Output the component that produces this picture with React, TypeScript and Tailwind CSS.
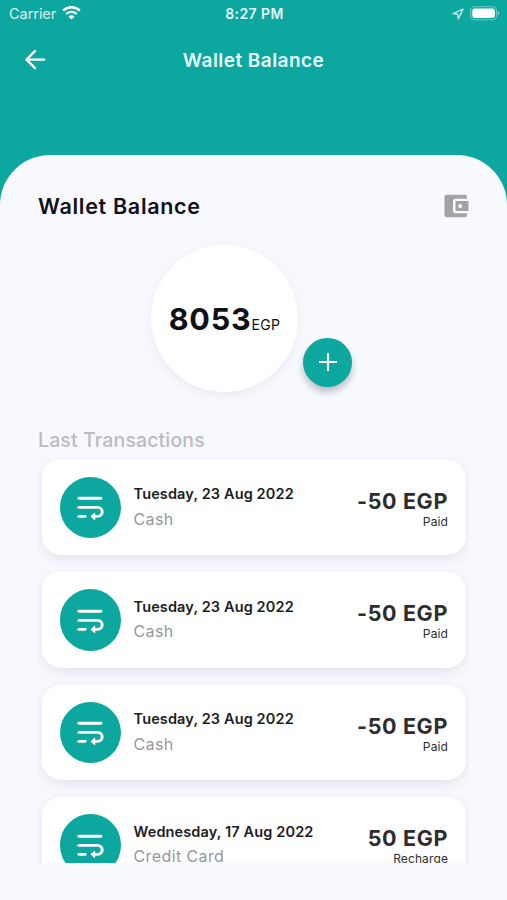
type Transaction = {
  date: string;
  method: string;
  amount: string;
  status: string;
};

const transactions: Transaction[] = [
  { date: "Tuesday, 23 Aug 2022", method: "Cash", amount: "-50 EGP", status: "Paid" },
  { date: "Tuesday, 23 Aug 2022", method: "Cash", amount: "-50 EGP", status: "Paid" },
  { date: "Tuesday, 23 Aug 2022", method: "Cash", amount: "-50 EGP", status: "Paid" },
  { date: "Wednesday, 17 Aug 2022", method: "Credit Card", amount: "50 EGP", status: "Recharge" },
];

function WifiIcon() {
  return (
    <svg width="19" height="14" viewBox="0 0 19 14" fill="none" stroke="white" className="-mt-[2px]">
      <path d="M1.2 4.6a12 12 0 0 1 16.6 0" strokeWidth="2.5" />
      <path d="M4.2 8a7.7 7.7 0 0 1 10.6 0" strokeWidth="2.3" />
      <path d="M9.5 13.6 6.4 10.5a4.4 4.4 0 0 1 6.2 0z" fill="white" stroke="none" />
    </svg>
  );
}

function StatusBar() {
  return (
    <div className="grid h-7 grid-cols-3 items-center pl-[9px] pr-[7px] text-white">
      <div className="flex items-center gap-[6px]">
        <span className="text-[14.5px] leading-7 tracking-[-0.05px] text-white/85">Carrier</span>
        <WifiIcon />
      </div>
      <div className="text-center text-[14px] font-semibold leading-7 tracking-[0.4px] text-white/90">8:27 PM</div>
      <div className="flex items-center justify-end gap-[6px]">
        <svg width="12" height="12" viewBox="0 0 12 12" fill="none" stroke="white" strokeOpacity="0.85" strokeWidth="1.2" strokeLinejoin="round">
          <path d="M11 1 1 5.7l4.7.5.6 4.8z" />
        </svg>
        <svg width="30" height="15" viewBox="0 0 30 15" className="-mt-[1px]">
          <rect x="0.6" y="0.8" width="26" height="13" rx="4" fill="none" stroke="white" strokeOpacity="0.4" strokeWidth="1.1" />
          <rect x="2.3" y="2.5" width="22.6" height="9.6" rx="2.4" fill="white" />
          <path d="M27.8 5.2v4.2c.9-.4 1.4-1.2 1.4-2.1s-.5-1.7-1.4-2.1z" fill="white" fillOpacity="0.5" />
        </svg>
      </div>
    </div>
  );
}

function WrapIcon() {
  return (
    <svg width="28" height="26" viewBox="0 0 28 26" fill="none" stroke="white" strokeWidth="2.9" strokeLinecap="round" strokeLinejoin="round">
      <path d="M2.9 4.3h22" />
      <path d="M2.9 13.4h18.8a4.5 4.5 0 0 1 0 9H18.5" />
      <path d="M2.9 22.4h6.2" />
      <path d="M18.6 19.4v6l-3.4-3z" fill="white" strokeWidth="1.2" />
    </svg>
  );
}

function TransactionCard({ date, method, amount, status }: Transaction) {
  return (
    <li className="flex h-[95.5px] shrink-0 rounded-[19px] bg-white pl-[17.5px] pr-[18px] shadow-[0_4px_12px_rgba(60,60,80,0.1)]">
      <div className="mt-[17px] flex size-[61.5px] shrink-0 items-center justify-center rounded-full bg-[#0ca79f]">
        <WrapIcon />
      </div>
      <div className="ml-[12.5px] mt-[24.5px] flex flex-1 flex-col whitespace-nowrap">
        <span className="text-[14.5px] font-semibold leading-[20px] tracking-[0.13px] text-[#1c1c22]">{date}</span>
        <span className="mt-[3.5px] text-[16px] leading-[22px] tracking-[0.4px] text-[#97979f]">{method}</span>
      </div>
      <div className="mt-[27px] flex flex-col items-end whitespace-nowrap text-[#2d2d2f]">
        <span className="text-[21.5px] font-bold leading-[28px] tracking-[0.65px]">{amount}</span>
        <span className="text-[12px] leading-[14px] tracking-[0.12px]">{status}</span>
      </div>
    </li>
  );
}

export default function App() {
  return (
    <div className="flex h-[900px] w-[507px] flex-col overflow-hidden bg-[linear-gradient(#0ca79f_250px,#f8f9fe_250px)] font-['Inter','Liberation_Sans',sans-serif]">
      <StatusBar />
      <header className="grid h-[64px] grid-cols-[60px_1fr_60px] items-center">
        <button aria-label="Back" className="pl-[25px]">
          <svg width="21" height="20" viewBox="0 0 21 20" fill="none" stroke="white" strokeWidth="2.4" strokeLinecap="round" strokeLinejoin="round">
            <path d="M19.2 9.6H1.7M10 1 1.5 9.6l8.5 8.6" />
          </svg>
        </button>
        <h1 className="pt-[1px] text-center text-[19px] font-semibold leading-6 tracking-[0.45px] text-[#e9fffd]">Wallet Balance</h1>
      </header>

      <main className="mt-[62.5px] flex flex-1 flex-col rounded-t-[50px] bg-[#f8f9fe]">
        <div className="mt-[37.5px] flex h-7 items-center justify-between pl-[38px] pr-[38px]">
          <h2 className="text-[21.5px] font-semibold leading-7 tracking-[0.7px] text-[#101018]">Wallet Balance</h2>
          <svg width="25" height="24" viewBox="0 0 25 24" className="fill-[#a3a3a3]">
            <path d="M2.5 0.8h18.5a2 2 0 0 1 2 2v1.9H11.5a2.5 2.5 0 0 0-2.5 2.5v9.6a2.5 2.5 0 0 0 2.5 2.5H23v2a2 2 0 0 1-2 2H2.5a2 2 0 0 1-2-2v-18.5a2 2 0 0 1 2-2z" />
            <path fillRule="evenodd" d="M11.5 7.1h13v9.8h-13zM16.2 10a2 2 0 1 0 0 4 2 2 0 0 0 0-4z" />
          </svg>
        </div>

        <section className="mt-[24.5px] flex h-[147px] items-end gap-[5px] pl-[151px]">
          <div className="flex size-[147px] items-center justify-center rounded-full bg-white shadow-[0_3px_10px_rgba(60,60,80,0.08)]">
            <div className="flex items-baseline pt-[1px] text-[#101018]">
              <span className="text-[30.5px] font-bold leading-10 tracking-[0.8px]">8053</span>
              <span className="text-[14px] leading-5 tracking-[0.35px]">EGP</span>
            </div>
          </div>
          <button aria-label="Add balance" className="mb-[5px] flex size-[49px] items-center justify-center rounded-full bg-[#0ca79f] shadow-[0_5px_7px_rgba(40,40,50,0.28)]">
            <svg width="18" height="18" viewBox="0 0 18 18" fill="none" stroke="white" strokeWidth="2.2">
              <path d="M9 0v18M0 9h18" />
            </svg>
          </button>
        </section>

        <h3 className="ml-[38px] mt-[34px] text-[19.5px] font-medium leading-7 tracking-[0.12px] text-[#bcbcc0]">Last Transactions</h3>
        <ul className="mx-[38px] mt-[2px] flex h-[407px] flex-col gap-[17px] overflow-hidden pl-[4px] pr-[3px] pt-[4px]">
          {transactions.map((item, index) => (
            <TransactionCard key={index} {...item} />
          ))}
        </ul>
      </main>
    </div>
  );
}
